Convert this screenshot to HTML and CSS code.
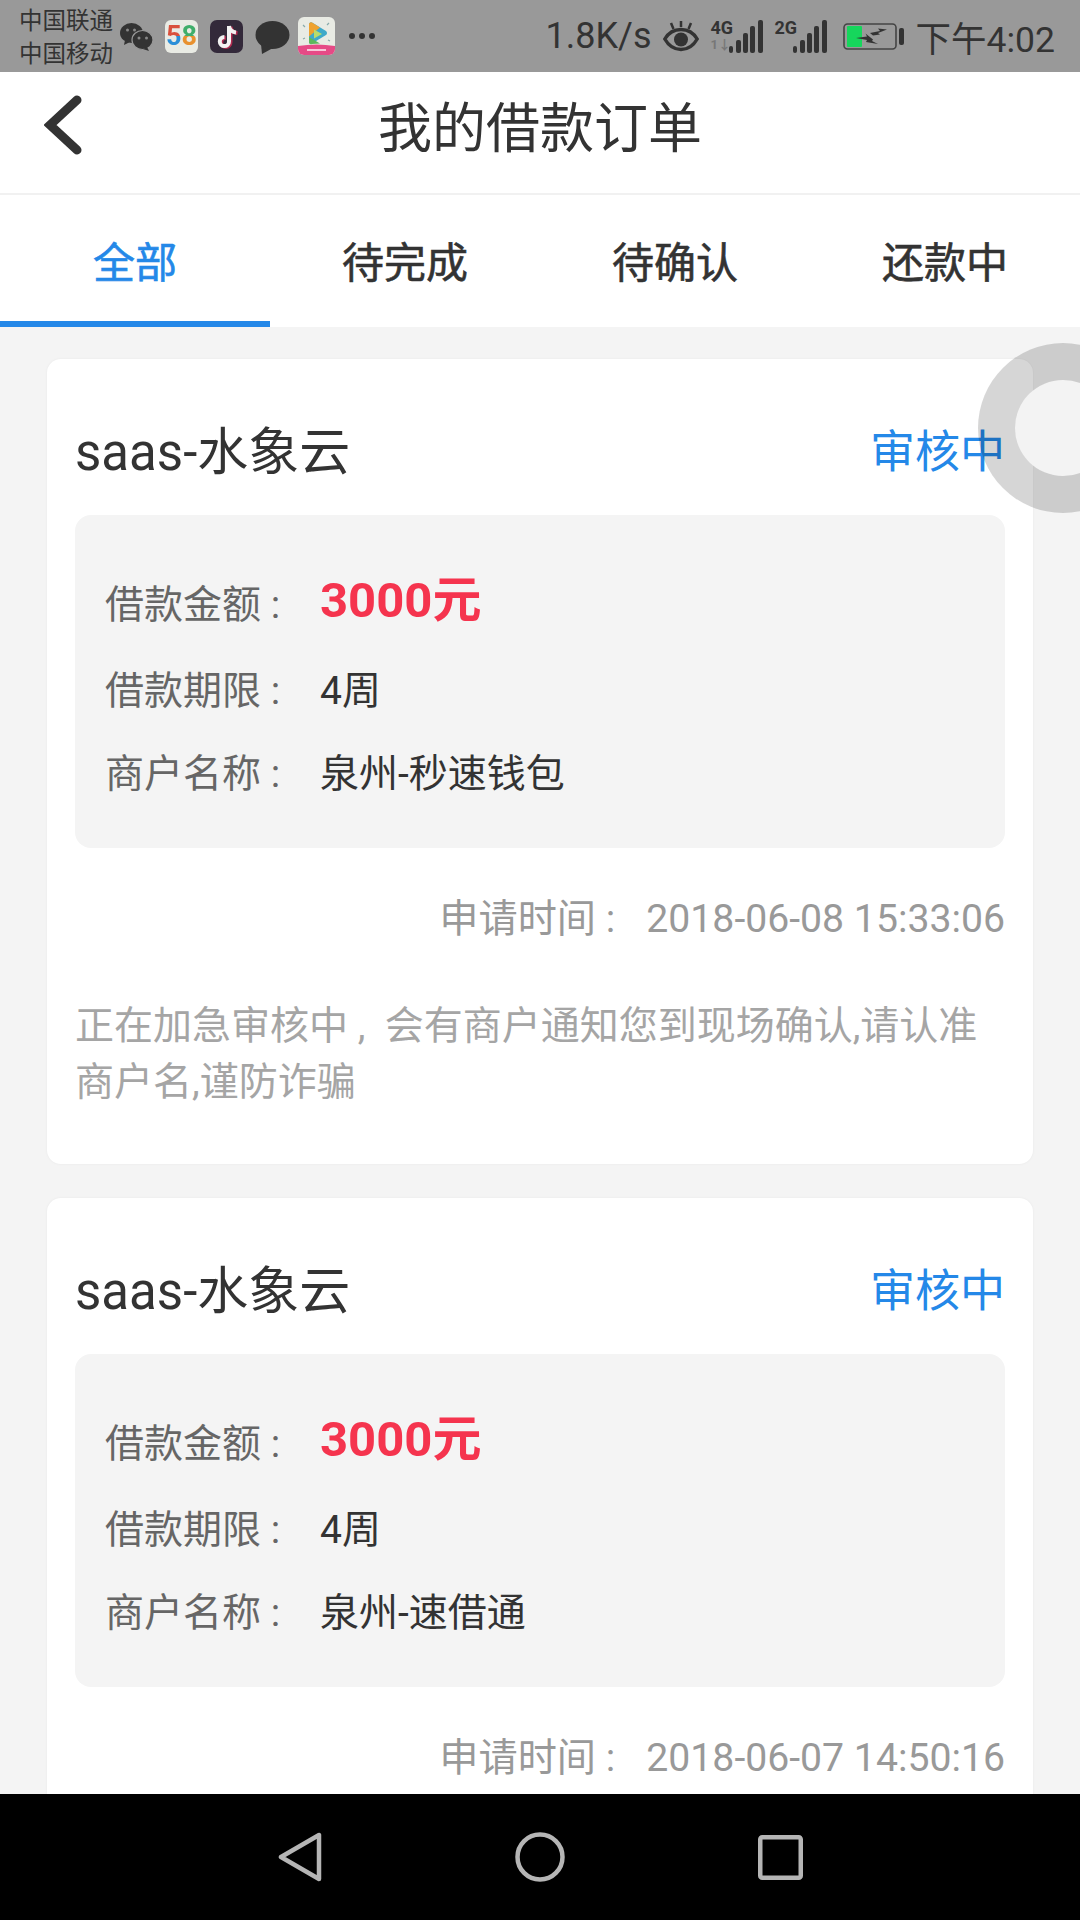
FILE: index.html
```html
<!DOCTYPE html>
<html lang="zh-CN">
<head>
   <meta charset="UTF-8">
   <meta name="viewport" content="width=device-width, initial-scale=1.0">
   <title>我的借款订单</title>
   <link rel="stylesheet" href="styles.css">
</head>

<body>
   <div class="screen">

      <!-- status bar -->
      <div class="status">
         <div class="carrier">
            <div>中国联通</div>
            <div>中国移动</div>
         </div>
         <svg class="ic-wechat" width="33" height="28" viewBox="0 0 33 28">
            <ellipse cx="11.500" cy="10" rx="11.500" ry="10" fill="#333"/>
            <path d="M5 17l-1 5 6-3z" fill="#333"/>
            <ellipse cx="22.500" cy="17" rx="10.500" ry="9.500" fill="#333" stroke="#999" stroke-width="1.200"/>
            <path d="M27 24l2 4-6-2z" fill="#333"/>
            <circle cx="7.500" cy="7" r="1.500" fill="#888"/>
            <circle cx="14.500" cy="7" r="1.500" fill="#888"/>
            <circle cx="19" cy="15" r="1.500" fill="#888"/>
            <circle cx="26.500" cy="15" r="1.500" fill="#888"/>
         </svg>
         <div class="app-58"><span class="d5">5</span><span class="d8">8</span></div>
         <svg class="ic-tiktok" width="33" height="33" viewBox="0 0 33 33">
            <rect width="33" height="33" rx="7" fill="#33293a"/>
            <path d="M19 6v15.500a4.600 4.600 0 1 1-4.600-4.600M19 6c.5 3.500 3 6 7 6.500" fill="none" stroke="#b02a50" stroke-width="4" transform="translate(1.500 .8)"/>
            <path d="M19 6v15.500a4.600 4.600 0 1 1-4.600-4.600M19 6c.5 3.500 3 6 7 6.500" fill="none" stroke="#f2f2f2" stroke-width="4"/>
         </svg>
         <svg class="ic-bubble" width="35" height="33" viewBox="0 0 35 33">
            <ellipse cx="17.500" cy="14" rx="17" ry="14" fill="#333"/>
            <path d="M6 23l1 10 11-6z" fill="#333"/>
         </svg>
         <svg class="ic-video" width="37" height="38" viewBox="0 0 37 38">
            <rect width="37" height="38" rx="6" fill="#e9ebe4"/>
            <path d="M0 29q18.500-3 37 0v3a6 6 0 0 1-6 6H6a6 6 0 0 1-6-6z" fill="#e64a86"/>
            <rect x="9" y="32" width="19" height="2" fill="#f6c6d8"/>
            <path d="M11 7a2 2 0 0 1 3-1.500l14 8.500a2.500 2.500 0 0 1 0 4l-14 8.500a2 2 0 0 1-3-1.500z" fill="#3fa9c9"/>
            <path d="M11 7a2 2 0 0 1 3-1.500l8 5-11 9z" fill="#efa22e"/>
            <path d="M11 20l11 6.500-8 .5a2 2 0 0 1-3-1.500z" fill="#5cb85c"/>
            <path d="M16 12.500l8 4.500-8 4.500z" fill="#b9dc6a"/>
            <path d="M5 8l2 2M31 6l-2 2M32 24l-2-1M5 22l2-1" stroke="#8aa" stroke-width="1.200"/>
         </svg>
         <div class="dots"><i></i><i></i><i></i></div>

         <div class="status-right">
            <span class="speed">1.8K/s</span>
            <svg class="ic-eye" width="36" height="32" viewBox="0 0 36 32">
               <path d="M1.800 19C6 12 11 9.500 18 9.500S30 12 34.200 19C30 26.500 25 29.500 18 29.500S6 26.500 1.800 19z" fill="none" stroke="#333" stroke-width="3.400"/>
               <circle cx="18" cy="19.500" r="7" fill="#333"/>
               <path d="M18 1v6M8 3l2.500 6M28 3l-2.500 6" stroke="#333" stroke-width="2.500"/>
            </svg>
            <div class="signal">
               <span class="net">4G</span>
               <span class="sub">1↓</span>
               <div class="bars"><i class="b1"></i><i class="b2"></i><i class="b3"></i><i class="b4"></i><i class="b5"></i></div>
            </div>
            <div class="signal">
               <span class="net">2G</span>
               <div class="bars"><i class="b1"></i><i class="b2"></i><i class="b3"></i><i class="b4"></i><i class="b5"></i></div>
            </div>
            <svg class="ic-battery" width="61" height="27" viewBox="0 0 61 27">
               <rect x="1" y="1" width="52" height="25" rx="3.500" fill="none" stroke="#444" stroke-width="1.600"/>
               <rect x="4" y="3" width="15" height="21" rx="1" fill="#16d65c"/>
               <path d="M13 15l11-1.500-1.500-3 7.500 6-1 1.500 6 3-12-2 1-2z" fill="#333"/>
               <path d="M27 10l10-2-2-2.500 9 1-9 3.500 2 1.500-7 1z" fill="#333"/>
               <rect x="56" y="5" width="5" height="17" rx="2" fill="#333"/>
            </svg>
            <span class="clock">下午4:02</span>
         </div>
      </div>

      <!-- title -->
      <div class="topbar">
         <svg class="back" width="42" height="64" viewBox="0 0 42 64">
            <path d="M33 7L6 32l27 25" fill="none" stroke="#333" stroke-width="9" stroke-linecap="round" stroke-linejoin="miter"/>
         </svg>
         <h1>我的借款订单</h1>
      </div>

      <div class="tabs">
         <div class="tab active">全部</div>
         <div class="tab">待完成</div>
         <div class="tab">待确认</div>
         <div class="tab">还款中</div>
      </div>

      <!-- orders -->
      <div class="list">
         <div class="ring"></div>

         <div class="card">
            <div class="card-head">
               <span class="name">saas-水象云</span>
               <span class="state">审核中</span>
            </div>
            <div class="info">
               <div class="row row-money">
                  <span class="lbl">借款金额 :</span>
                  <span class="money">3000元</span>
               </div>
               <div class="row">
                  <span class="lbl">借款期限 :</span>
                  <span class="val">4周</span>
               </div>
               <div class="row">
                  <span class="lbl">商户名称 :</span>
                  <span class="val">泉州-秒速钱包</span>
               </div>
            </div>
            <div class="apply-time">
               <span class="apply-lbl">申请时间 :</span>
               <span>2018-06-08 15:33:06</span>
            </div>
            <div class="note">正在加急审核中 ,&nbsp;&nbsp;会有商户通知您到现场确认,请认准商户名,谨防诈骗</div>
         </div>

         <div class="card">
            <div class="card-head">
               <span class="name">saas-水象云</span>
               <span class="state">审核中</span>
            </div>
            <div class="info">
               <div class="row row-money">
                  <span class="lbl">借款金额 :</span>
                  <span class="money">3000元</span>
               </div>
               <div class="row">
                  <span class="lbl">借款期限 :</span>
                  <span class="val">4周</span>
               </div>
               <div class="row">
                  <span class="lbl">商户名称 :</span>
                  <span class="val">泉州-速借通</span>
               </div>
            </div>
            <div class="apply-time">
               <span class="apply-lbl">申请时间 :</span>
               <span>2018-06-07 14:50:16</span>
            </div>
         </div>
      </div>

      <!-- android keys -->
      <div class="keys">
         <svg width="44" height="50" viewBox="0 0 44 50">
            <path d="M3 25L41 3v44z" fill="none" stroke="#b5b5b5" stroke-width="4.500" stroke-linejoin="round"/>
         </svg>
         <svg width="50" height="50" viewBox="0 0 50 50">
            <circle cx="25" cy="25" r="22.500" fill="none" stroke="#b5b5b5" stroke-width="4.500"/>
         </svg>
         <svg width="45" height="45" viewBox="0 0 45 45">
            <rect x="2.250" y="2.250" width="40.500" height="40.500" rx="2" fill="none" stroke="#b5b5b5" stroke-width="4.500"/>
         </svg>
      </div>
   </div>
</body>
</html>
```

FILE: styles.css
```css
* {
   box-sizing: border-box;
   font-family: Roboto, 'Noto Sans CJK SC', sans-serif;
}

html,
body {
   margin: 0;
   padding: 0;
}

.screen {
   width: 1080px;
   height: 1920px;
   display: flex;
   flex-direction: column;
   overflow: hidden;
   background: #f4f4f4;
}

/* status bar */
.status {
   height: 72px;
   flex: none;
   display: flex;
   align-items: center;
   padding-left: 19px;
   background: #999;
   color: #333;
}

.carrier {
   width: 101px;
   padding-top: 4px;
   font-size: 23.500px;
   line-height: 33px;
}

.ic-wechat {
   margin-top: 1px;
}

.app-58 {
   width: 33px;
   height: 33px;
   margin-left: 12px;
   border-radius: 6px;
   background: #e9ebe4;
   font-size: 27px;
   line-height: 33px;
   font-weight: bold;
   text-align: center;
}

.d5,
.d8 {
   font-size: 27px;
   -webkit-background-clip: text;
   background-clip: text;
   color: transparent;
}

.d5 {
   background-image: linear-gradient(#d9503c 50%, #2b8fd8 50%);
}

.d8 {
   background-image: linear-gradient(#3fae6a 50%, #e8912e 50%);
}

.ic-tiktok {
   margin-left: 12px;
}

.ic-bubble {
   margin-left: 12px;
   margin-top: 2px;
}

.ic-video {
   margin-left: 8px;
}

.dots {
   display: flex;
   gap: 4px;
   margin-left: 14px;
}

.dots i {
   width: 6px;
   height: 6px;
   border-radius: 50%;
   background: #333;
}

.status-right {
   margin-left: auto;
   padding-right: 25px;
   display: flex;
   align-items: center;
}

.speed {
   font-size: 36px;
   width: 117px;
}

.signal {
   position: relative;
   width: 52px;
   height: 33px;
   margin-left: 12px;
}

.signal .net {
   position: absolute;
   left: 0;
   top: 0;
   font-family: 'Liberation Sans Narrow', Roboto, sans-serif;
   font-size: 18px;
   line-height: 15px;
   font-weight: bold;
}

.signal .sub {
   position: absolute;
   left: 0;
   top: 17px;
   font-size: 13px;
   line-height: 16px;
   font-weight: bold;
   color: #777;
}

.bars {
   position: absolute;
   right: 0;
   bottom: 0;
   display: flex;
   align-items: flex-end;
   gap: 2.500px;
}

.bars i {
   width: 4.800px;
   border-radius: 2px;
   background: #333;
}

.b1 {
   height: 7px;
}

.b2 {
   height: 13px;
}

.b3 {
   height: 20px;
}

.b4 {
   height: 27px;
}

.b5 {
   height: 33px;
}

.ic-battery {
   margin-left: 16px;
}

.clock {
   font-size: 35.500px;
   margin-left: 12px;
}

/* title */
.topbar {
   height: 123px;
   flex: none;
   display: flex;
   align-items: center;
   justify-content: center;
   position: relative;
   padding-bottom: 16px;
   background: #fff;
   border-bottom: 2px solid #f1f1f1;
}

.topbar h1 {
   margin: 0;
   font-size: 54px;
   font-weight: normal;
   color: #333;
}

.back {
   position: absolute;
   left: 44px;
   top: 21px;
}

.tabs {
   height: 132px;
   flex: none;
   display: flex;
   background: #fff;
}

.tab {
   width: 270px;
   padding-top: 38px;
   text-align: center;
   font-size: 42px;
   line-height: 62px;
   color: #333;
   -webkit-text-stroke: 0.6px currentColor;
}

.tab.active {
   color: #2488e8;
   border-bottom: 6px solid #2488e8;
}

/* orders */
.list {
   flex: 1;
   min-height: 0;
   position: relative;
   overflow: hidden;
   padding: 32px 47px 0 47px;
}

.ring {
   position: absolute;
   left: 978px;
   top: 16px;
   width: 170px;
   height: 170px;
   border-radius: 50%;
   border: 37px solid rgba(0, 0, 0, 0.16);
   background: #f3f3f3;
   background-clip: padding-box;
   z-index: 2;
}

.card {
   background: #fff;
   border-radius: 14px;
   padding: 0 28px;
   height: 805px;
   margin-bottom: 34px;
   box-shadow: 0 0 3px rgba(0, 0, 0, 0.05);
}

.card-head {
   height: 156px;
   display: flex;
   justify-content: space-between;
   align-items: center;
}

.name {
   font-size: 51px;
   color: #333;
   padding-top: 22px;
}

.state {
   font-size: 45px;
   color: #2488e8;
   padding-top: 22px;
}

.info {
   height: 333px;
   padding: 54px 30px 0;
   border-radius: 16px;
   background: #f4f4f4;
}

.row {
   display: flex;
   align-items: center;
   height: 83px;
}

.row-money {
   height: 64px;
   margin-bottom: 12px;
}

.lbl {
   width: 215px;
   font-size: 39px;
   color: #666;
}

.val {
   font-size: 39px;
   color: #333;
}

.money {
   padding-bottom: 12px;
   font-size: 49px;
   font-weight: bold;
   color: #f5344e;
}

.apply-time {
   margin-top: 44px;
   display: flex;
   justify-content: flex-end;
   font-size: 39.200px;
   line-height: 54px;
   color: #999;
}

.apply-lbl {
   width: 207px;
}

.note {
   margin-top: 52px;
   font-size: 39px;
   line-height: 56px;
   color: #a5a5a5;
}

/* android keys */
.keys {
   height: 126px;
   flex: none;
   display: flex;
   align-items: center;
   justify-content: center;
   gap: 193px;
   background: #000;
   position: relative;
   z-index: 3;
}
```
